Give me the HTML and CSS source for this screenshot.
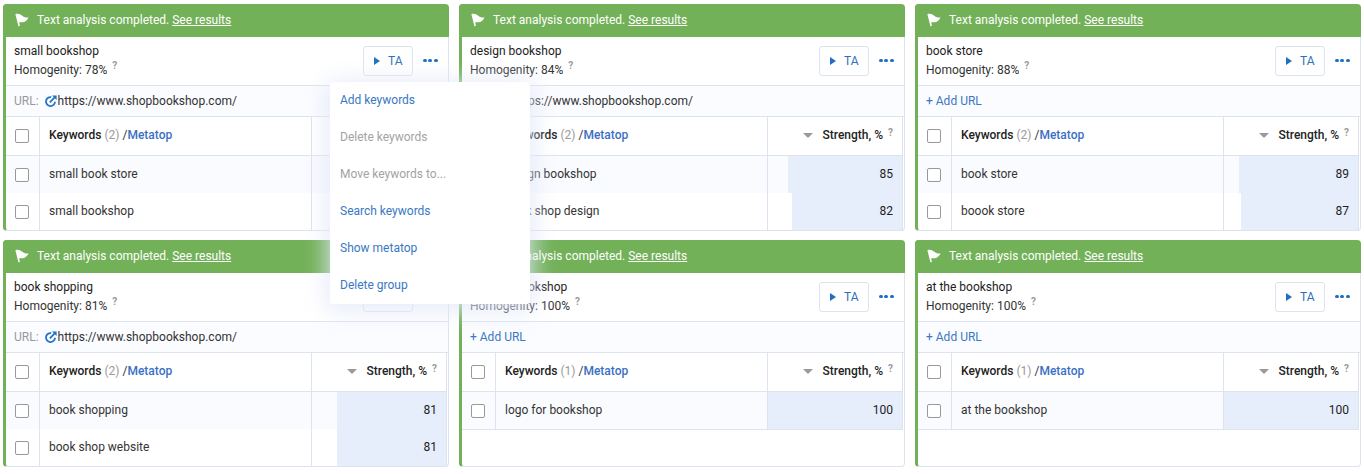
FILE: index.html
```html
<!DOCTYPE html>
<html lang="en">
<head>
<meta charset="utf-8">
<title>Keyword groups</title>
<link rel="stylesheet" href="styles.css">
</head>
<body>
<svg class="defs" width="0" height="0" aria-hidden="true">
  <symbol id="flag" viewBox="0 0 14 14"><path d="M.4 1.300C2.800.2 5 1.300 7.500 2.900c2 1.200 4 1.900 6 1.500C12.200 7 10.500 8.900 8 9.300c-1.500.2-2.900-.3-3.800.2l.7 3.500-1.500.3L.4 1.300z" fill="#fff"/></symbol>
  <symbol id="ext" viewBox="0 0 12 12"><path d="M6.200 2.100A4.500 4.500 0 1 0 10 6.700" fill="none" stroke="currentColor" stroke-width="1.800"/><path d="M4.800 7.300 10 2.100" fill="none" stroke="currentColor" stroke-width="1.800"/><path d="M7 .4h4.600V5z" fill="currentColor"/></symbol>
</svg>
<main class="board">

  <section class="card has-menu">
    <div class="banner"><svg class="flag"><use href="#flag"/></svg><span>Text analysis completed. <a class="see">See results</a></span></div>
    <div class="head">
      <div class="titles"><div class="name">small bookshop</div><div class="homog">Homogenity: 78% <sup class="q">?</sup></div></div>
      <button class="ta"><i class="play"></i>TA</button>
      <div class="more"><i></i><i></i><i></i></div>
    </div>
    <div class="url"><span class="url-label">URL:</span><svg class="ext"><use href="#ext"/></svg><span>https://www.shopbookshop.com/</span></div>
    <div class="table">
      <div class="row thead"><div class="cell check"><span class="box"></span></div><div class="cell kw"><b>Keywords</b>&nbsp;<span class="count">(2)</span>&nbsp;<span class="slash">/</span><b class="meta">Metatop</b></div><div class="cell str"><i class="caret"></i><span class="str-label">Strength, %</span><sup class="q">?</sup></div></div>
      <div class="row tint"><div class="cell check"><span class="box"></span></div><div class="cell kw">small book store</div><div class="cell val"></div></div>
      <div class="row"><div class="cell check"><span class="box"></span></div><div class="cell kw">small bookshop</div><div class="cell val"></div></div>
    </div>
    <ul class="menu">
      <li>Add keywords</li>
      <li class="off">Delete keywords</li>
      <li class="off">Move keywords to...</li>
      <li>Search keywords</li>
      <li>Show metatop</li>
      <li>Delete group</li>
    </ul>
  </section>

  <section class="card">
    <div class="banner"><svg class="flag"><use href="#flag"/></svg><span>Text analysis completed. <a class="see">See results</a></span></div>
    <div class="head">
      <div class="titles"><div class="name">design bookshop</div><div class="homog">Homogenity: 84% <sup class="q">?</sup></div></div>
      <button class="ta"><i class="play"></i>TA</button>
      <div class="more"><i></i><i></i><i></i></div>
    </div>
    <div class="url"><span class="url-label">URL:</span><svg class="ext"><use href="#ext"/></svg><span>https://www.shopbookshop.com/</span></div>
    <div class="table">
      <div class="row thead"><div class="cell check"><span class="box"></span></div><div class="cell kw"><b>Keywords</b>&nbsp;<span class="count">(2)</span>&nbsp;<span class="slash">/</span><b class="meta">Metatop</b></div><div class="cell str"><i class="caret"></i><span class="str-label">Strength, %</span><sup class="q">?</sup></div></div>
      <div class="row tint"><div class="cell check"><span class="box"></span></div><div class="cell kw">design bookshop</div><div class="cell val"><span class="bar" style="width:85%"></span><span class="num">85</span></div></div>
      <div class="row"><div class="cell check"><span class="box"></span></div><div class="cell kw">book shop design</div><div class="cell val"><span class="bar" style="width:82%"></span><span class="num">82</span></div></div>
    </div>
  </section>

  <section class="card">
    <div class="banner"><svg class="flag"><use href="#flag"/></svg><span>Text analysis completed. <a class="see">See results</a></span></div>
    <div class="head">
      <div class="titles"><div class="name">book store</div><div class="homog">Homogenity: 88% <sup class="q">?</sup></div></div>
      <button class="ta"><i class="play"></i>TA</button>
      <div class="more"><i></i><i></i><i></i></div>
    </div>
    <div class="url"><span class="add">+ Add URL</span></div>
    <div class="table">
      <div class="row thead"><div class="cell check"><span class="box"></span></div><div class="cell kw"><b>Keywords</b>&nbsp;<span class="count">(2)</span>&nbsp;<span class="slash">/</span><b class="meta">Metatop</b></div><div class="cell str"><i class="caret"></i><span class="str-label">Strength, %</span><sup class="q">?</sup></div></div>
      <div class="row tint"><div class="cell check"><span class="box"></span></div><div class="cell kw">book store</div><div class="cell val"><span class="bar" style="width:89%"></span><span class="num">89</span></div></div>
      <div class="row"><div class="cell check"><span class="box"></span></div><div class="cell kw">boook store</div><div class="cell val"><span class="bar" style="width:87%"></span><span class="num">87</span></div></div>
    </div>
  </section>

  <section class="card">
    <div class="banner"><svg class="flag"><use href="#flag"/></svg><span>Text analysis completed. <a class="see">See results</a></span></div>
    <div class="head">
      <div class="titles"><div class="name">book shopping</div><div class="homog">Homogenity: 81% <sup class="q">?</sup></div></div>
      <button class="ta"><i class="play"></i>TA</button>
      <div class="more"><i></i><i></i><i></i></div>
    </div>
    <div class="url"><span class="url-label">URL:</span><svg class="ext"><use href="#ext"/></svg><span>https://www.shopbookshop.com/</span></div>
    <div class="table">
      <div class="row thead"><div class="cell check"><span class="box"></span></div><div class="cell kw"><b>Keywords</b>&nbsp;<span class="count">(2)</span>&nbsp;<span class="slash">/</span><b class="meta">Metatop</b></div><div class="cell str"><i class="caret"></i><span class="str-label">Strength, %</span><sup class="q">?</sup></div></div>
      <div class="row tint"><div class="cell check"><span class="box"></span></div><div class="cell kw">book shopping</div><div class="cell val"><span class="bar" style="width:81%"></span><span class="num">81</span></div></div>
      <div class="row"><div class="cell check"><span class="box"></span></div><div class="cell kw">book shop website</div><div class="cell val"><span class="bar" style="width:81%"></span><span class="num">81</span></div></div>
    </div>
  </section>

  <section class="card">
    <div class="banner"><svg class="flag"><use href="#flag"/></svg><span>Text analysis completed. <a class="see">See results</a></span></div>
    <div class="head">
      <div class="titles"><div class="name">logo for bookshop</div><div class="homog">Homogenity: 100% <sup class="q">?</sup></div></div>
      <button class="ta"><i class="play"></i>TA</button>
      <div class="more"><i></i><i></i><i></i></div>
    </div>
    <div class="url"><span class="add">+ Add URL</span></div>
    <div class="table">
      <div class="row thead"><div class="cell check"><span class="box"></span></div><div class="cell kw"><b>Keywords</b>&nbsp;<span class="count">(1)</span>&nbsp;<span class="slash">/</span><b class="meta">Metatop</b></div><div class="cell str"><i class="caret"></i><span class="str-label">Strength, %</span><sup class="q">?</sup></div></div>
      <div class="row tint"><div class="cell check"><span class="box"></span></div><div class="cell kw">logo for bookshop</div><div class="cell val"><span class="bar" style="width:100%"></span><span class="num">100</span></div></div>
    </div>
  </section>

  <section class="card">
    <div class="banner"><svg class="flag"><use href="#flag"/></svg><span>Text analysis completed. <a class="see">See results</a></span></div>
    <div class="head">
      <div class="titles"><div class="name">at the bookshop</div><div class="homog">Homogenity: 100% <sup class="q">?</sup></div></div>
      <button class="ta"><i class="play"></i>TA</button>
      <div class="more"><i></i><i></i><i></i></div>
    </div>
    <div class="url"><span class="add">+ Add URL</span></div>
    <div class="table">
      <div class="row thead"><div class="cell check"><span class="box"></span></div><div class="cell kw"><b>Keywords</b>&nbsp;<span class="count">(1)</span>&nbsp;<span class="slash">/</span><b class="meta">Metatop</b></div><div class="cell str"><i class="caret"></i><span class="str-label">Strength, %</span><sup class="q">?</sup></div></div>
      <div class="row tint"><div class="cell check"><span class="box"></span></div><div class="cell kw">at the bookshop</div><div class="cell val"><span class="bar" style="width:100%"></span><span class="num">100</span></div></div>
    </div>
  </section>

</main>
</body>
</html>
```
FILE: styles.css
```css
* { box-sizing: border-box; }
html, body { margin: 0; padding: 0; background: #fff; }
body { font: 12px/16px Roboto, "Liberation Sans", sans-serif; color: #222; overflow: hidden; height: 474px; }
.defs { position: absolute; }

.board {
  display: grid;
  grid-template-columns: repeat(3, 446px);
  grid-auto-rows: 227px;
  column-gap: 10px;
  row-gap: 9px;
  padding: 4px 0 0 3px;
}

.card {
  position: relative;
  display: flex;
  flex-direction: column;
  background: #fff;
  border: 1px solid #dde3ef;
  border-left: 3px solid #72b158;
  border-top: 0;
  border-radius: 4px;
}

.banner {
  display: flex;
  align-items: center;
  height: 33px;
  margin: 0 -1px 0 -3px;
  padding: 0 0 1px 12px;
  background: #72b158;
  color: #fff;
  border-radius: 4px 4px 0 0;
  flex: none;
  font-size: 12px;
}
.flag { width: 14px; height: 14px; margin-right: 8px; flex: none; }
.see { text-decoration: underline; }

.head {
  display: flex;
  align-items: center;
  height: 49px;
  padding: 0 10px 1px 8px;
  border-bottom: 1px solid #dde3ef;
  flex: none;
}
.titles { flex: 1; }
.name { line-height: 19px; color: #1c1c1c; }
.homog { line-height: 19px; color: #333; }
.q { font-size: 10px; line-height: 0; color: #999; font-weight: 700; vertical-align: 5px; margin-left: 2px; }

.ta {
  display: flex;
  align-items: center;
  width: 50px;
  height: 30px;
  margin-right: 10px;
  padding: 1px 0 0 10px;
  background: #fff;
  border: 1px solid #dde3ef;
  border-radius: 3px;
  font: 12px Roboto, sans-serif;
  color: #2f6fbe;
}
.play {
  width: 0;
  height: 0;
  margin: -1px 8px 0 0;
  border-left: 6px solid #1f6fc2;
  border-top: 4px solid transparent;
  border-bottom: 4px solid transparent;
}
.more { display: flex; gap: 1.800px; width: 15px; }
.more i { width: 3.700px; height: 3.700px; border-radius: 50%; background: #1f6fc2; }

.url {
  display: flex;
  align-items: center;
  height: 31px;
  padding: 0 8px 1px;
  background: #fbfcff;
  border-bottom: 1px solid #dde3ef;
  flex: none;
  color: #333;
}
.url-label { color: #999; margin-right: 6px; }
.ext { width: 12px; height: 12px; color: #2273c9; margin-right: 1px; flex: none; }
.add { color: #3a78c3; }

.table { margin-right: 1px; border-right: 1px solid #dde3ef; }
.row {
  display: grid;
  grid-template-columns: 34px 1fr 135px;
  height: 37px;
}
.row:last-child { height: 38px; border-bottom: 1px solid #dde3ef; }
.row.thead { height: 39px; border-bottom: 1px solid #dde3ef; }
.row.tint { background: #fafbff; }
.cell { display: flex; align-items: center; }
.check { justify-content: flex-start; padding-left: 9px; border-right: 1px solid #dde3ef; }
.box { width: 14px; height: 14px; border: 1px solid #999; border-radius: 2px; background: #fff; }
.kw { padding: 0 0 1px 9px; color: #333; }
.thead b { font-weight: 500; color: #222; }
.thead .kw { padding-bottom: 2px; }
.count { color: #999; }
.slash { color: #333; }
.thead .meta { color: #3a6fc4; }

.str { justify-content: flex-end; padding: 0 9px 2px 0; border-left: 1px solid #dde3ef; }
.caret {
  width: 0;
  height: 0;
  margin-right: 10px;
  border-top: 5px solid #999;
  border-left: 5px solid transparent;
  border-right: 5px solid transparent;
}
.str-label { font-weight: 500; color: #222; }
.str .q { margin-left: 5px; vertical-align: 0; align-self: flex-start; line-height: 10px; margin-top: 11px; }

.val { position: relative; justify-content: flex-end; padding: 0 9px 1px 0; border-left: 1px solid #dde3ef; }
.bar { position: absolute; top: 0; right: 0; bottom: 0; background: #e6edfb; }
.num { position: relative; color: #222; }

.menu {
  position: absolute;
  top: 78px;
  left: 324px;
  z-index: 5;
  width: 200px;
  height: 222px;
  margin: 0;
  padding: 0;
  list-style: none;
  background: #fff;
  border-radius: 3px;
  box-shadow: 0 3px 22px 4px rgba(226, 231, 248, .85);
}
.menu li { display: flex; align-items: center; height: 37px; padding: 0 0 1px 10px; color: #3a78c3; }
.menu li.off { color: #a3a3a3; }
```
